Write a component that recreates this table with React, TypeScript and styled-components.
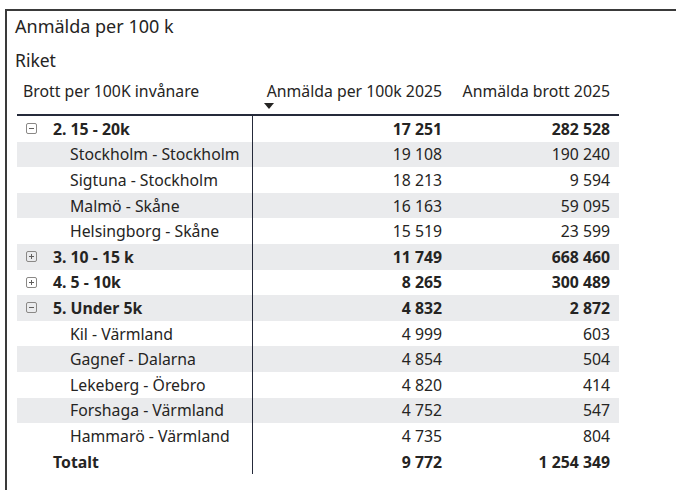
import React from "react";
import styled, { createGlobalStyle } from "styled-components";

const Global = createGlobalStyle`
  html, body { margin: 0; padding: 0; background: #fff; }
  body { font-family: "Noto Sans", "Open Sans", sans-serif; color: #252423; }
`;

const Frame = styled.div`
  margin: 9px 0 0 5px;
  height: 481px;
  border-top: 2px solid #3a3a3a;
  border-left: 2px solid #3a3a3a;
  box-sizing: border-box;
  padding: 2px 0 0 8px;
  overflow: hidden;
`;

const Title = styled.div`
  font-size: 18px;
  line-height: 26px;
`;

const Subtitle = styled.div`
  font-size: 17.5px;
  line-height: 24px;
  margin-top: 9px;
`;

const Table = styled.div`
  width: 602px;
  margin-left: 2px;
  margin-top: 2px;
  display: flex;
  flex-direction: column;
`;

const HeaderRow = styled.div`
  display: grid;
  grid-template-columns: 236px 198px 168px;
  height: 42px;
  border-bottom: 2px solid #252a3a;
  box-sizing: border-box;
`;

const HeadCell = styled.div<{ $right?: boolean }>`
  font-size: 15.8px;
  padding: ${(p) => (p.$right ? "0 9px 0 0" : "0 0 0 6px")};
  text-align: ${(p) => (p.$right ? "right" : "left")};
  line-height: 20px;
  padding-top: 7px;
  position: relative;
  white-space: nowrap;
`;

const SortArrow = styled.span`
  position: absolute;
  left: 11px;
  top: 29px;
  width: 0;
  height: 0;
  border-left: 5px solid transparent;
  border-right: 5px solid transparent;
  border-top: 6px solid #252423;
`;

const Row = styled.div<{ $shade?: boolean }>`
  display: grid;
  grid-template-columns: 236px 198px 168px;
  height: 25.6px;
  background: ${(p) => (p.$shade ? "#eaebed" : "transparent")};
`;

const LabelCell = styled.div<{ $level: number; $bold?: boolean }>`
  display: flex;
  align-items: center;
  border-right: 1px solid #252a3a;
  padding-left: ${(p) => (p.$level === 0 ? "9px" : p.$level === 1 ? "53px" : "36px")};
  font-size: 15.8px;
  font-weight: ${(p) => (p.$bold ? 700 : 400)};
  white-space: nowrap;
`;

const ValueCell = styled.div<{ $bold?: boolean }>`
  display: flex;
  align-items: center;
  justify-content: flex-end;
  padding-right: 9px;
  font-size: 15.8px;
  font-weight: ${(p) => (p.$bold ? 700 : 400)};
  white-space: nowrap;
`;

const Toggle = styled.span`
  width: 11px;
  height: 11px;
  border: 1px solid #8a8886;
  border-radius: 2px;
  margin-right: 16px;
  position: relative;
  flex: none;
  box-sizing: border-box;
  &::before {
    content: "";
    position: absolute;
    left: 2px;
    right: 2px;
    top: 4px;
    height: 1px;
    background: #605e5c;
  }
`;

const PlusToggle = styled(Toggle)`
  &::after {
    content: "";
    position: absolute;
    top: 2px;
    bottom: 2px;
    left: 4px;
    width: 1px;
    background: #605e5c;
  }
`;

type R = { label: string; a: string; b: string; kind: "open" | "closed" | "child" | "total" };

const rows: R[] = [
  { label: "2. 15 - 20k", a: "17 251", b: "282 528", kind: "open" },
  { label: "Stockholm - Stockholm", a: "19 108", b: "190 240", kind: "child" },
  { label: "Sigtuna - Stockholm", a: "18 213", b: "9 594", kind: "child" },
  { label: "Malmö - Skåne", a: "16 163", b: "59 095", kind: "child" },
  { label: "Helsingborg - Skåne", a: "15 519", b: "23 599", kind: "child" },
  { label: "3. 10 - 15 k", a: "11 749", b: "668 460", kind: "closed" },
  { label: "4. 5 - 10k", a: "8 265", b: "300 489", kind: "closed" },
  { label: "5. Under 5k", a: "4 832", b: "2 872", kind: "open" },
  { label: "Kil - Värmland", a: "4 999", b: "603", kind: "child" },
  { label: "Gagnef - Dalarna", a: "4 854", b: "504", kind: "child" },
  { label: "Lekeberg - Örebro", a: "4 820", b: "414", kind: "child" },
  { label: "Forshaga - Värmland", a: "4 752", b: "547", kind: "child" },
  { label: "Hammarö - Värmland", a: "4 735", b: "804", kind: "child" },
  { label: "Totalt", a: "9 772", b: "1 254 349", kind: "total" },
];

export default function App() {
  return (
    <>
      <Global />
      <Frame>
        <Title>Anmälda per 100 k</Title>
        <Subtitle>Riket</Subtitle>
        <Table>
          <HeaderRow>
            <HeadCell>Brott per 100K invånare</HeadCell>
            <HeadCell $right>
              Anmälda per 100k 2025
              <SortArrow />
            </HeadCell>
            <HeadCell $right>Anmälda brott 2025</HeadCell>
          </HeaderRow>
          {rows.map((r, i) => {
            const bold = r.kind !== "child";
            const level = r.kind === "child" ? 1 : r.kind === "total" ? 2 : 0;
            return (
              <Row key={r.label} $shade={r.kind !== "total" && i % 2 === 1}>
                <LabelCell $level={level} $bold={bold}>
                  {r.kind === "open" && <Toggle />}
                  {r.kind === "closed" && <PlusToggle />}
                  {r.label}
                </LabelCell>
                <ValueCell $bold={bold}>{r.a}</ValueCell>
                <ValueCell $bold={bold}>{r.b}</ValueCell>
              </Row>
            );
          })}
        </Table>
      </Frame>
    </>
  );
}
